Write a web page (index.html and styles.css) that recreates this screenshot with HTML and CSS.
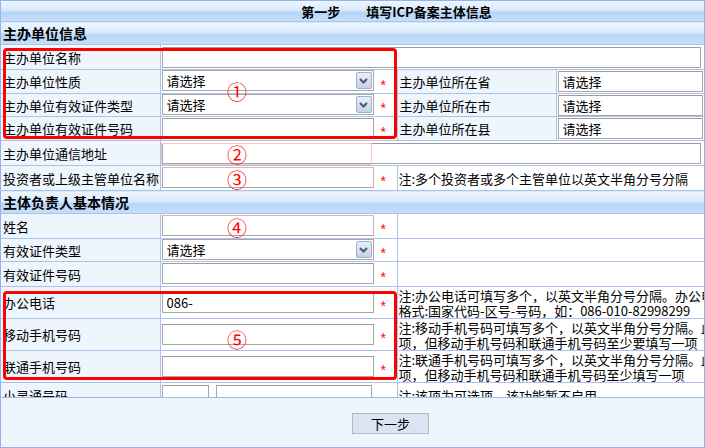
FILE: index.html
```html
<!DOCTYPE html>
<html lang="zh-CN">
<head>
<meta charset="UTF-8" />
<title>第一步 填写ICP备案主体信息</title>
<link rel="stylesheet" href="styles.css">
</head>
<body>
<div class="panel">
    <div class="scroll">
        <table class="form">
            <colgroup>
                <col class="c1"><col class="c2"><col class="c3"><col class="c4">
            </colgroup>
            <tr class="title"><td colspan="4">第一步　　填写ICP备案主体信息</td></tr>
            <tr class="section"><td colspan="4">主办单位信息</td></tr>
            <tr class="r25">
                <td class="label">主办单位名称</td>
                <td class="field" colspan="3"><input type="text" class="text wide"></td>
            </tr>
            <tr>
                <td class="label">主办单位性质</td>
                <td class="field"><div class="select">请选择<span class="arrow"><svg width="9" height="6" viewBox="0 0 9 6"><path d="M1 1l3.5 3.5L8 1" fill="none" stroke="#4d5b70" stroke-width="2"/></svg></span></div><span class="star">*</span></td>
                <td class="label">主办单位所在省</td>
                <td class="field"><div class="text side">请选择</div></td>
            </tr>
            <tr class="r23">
                <td class="label">主办单位有效证件类型</td>
                <td class="field"><div class="select">请选择<span class="arrow"><svg width="9" height="6" viewBox="0 0 9 6"><path d="M1 1l3.5 3.5L8 1" fill="none" stroke="#4d5b70" stroke-width="2"/></svg></span></div><span class="star">*</span></td>
                <td class="label">主办单位所在市</td>
                <td class="field"><div class="text side">请选择</div></td>
            </tr>
            <tr>
                <td class="label">主办单位有效证件号码</td>
                <td class="field"><input type="text" class="text"><span class="star">*</span></td>
                <td class="label">主办单位所在县</td>
                <td class="field"><div class="text side">请选择</div></td>
            </tr>
            <tr class="r25">
                <td class="label">主办单位通信地址</td>
                <td class="field" colspan="3"><input type="text" class="text wide"></td>
            </tr>
            <tr class="r25">
                <td class="label">投资者或上级主管单位名称</td>
                <td class="field"><input type="text" class="text hint"><span class="star">*</span></td>
                <td class="note" colspan="2">注:多个投资者或多个主管单位以英文半角分号分隔</td>
            </tr>
            <tr class="section"><td colspan="4">主体负责人基本情况</td></tr>
            <tr class="r25">
                <td class="label">姓名</td>
                <td class="field"><input type="text" class="text hint"><span class="star">*</span></td>
                <td colspan="2"></td>
            </tr>
            <tr class="r23">
                <td class="label">有效证件类型</td>
                <td class="field"><div class="select">请选择<span class="arrow"><svg width="9" height="6" viewBox="0 0 9 6"><path d="M1 1l3.5 3.5L8 1" fill="none" stroke="#4d5b70" stroke-width="2"/></svg></span></div><span class="star">*</span></td>
                <td colspan="2"></td>
            </tr>
            <tr class="r25">
                <td class="label">有效证件号码</td>
                <td class="field"><input type="text" class="text"><span class="star">*</span></td>
                <td colspan="2"></td>
            </tr>
            <tr class="tall">
                <td class="label">办公电话</td>
                <td class="field"><input type="text" class="text" value="086-"><span class="star">*</span></td>
                <td class="note" colspan="2"><div class="line">注:办公电话可填写多个，以英文半角分号分隔。办公电话</div><div class="line">格式:国家代码-区号-号码，如：086-010-82998299</div></td>
            </tr>
            <tr class="tall">
                <td class="label">移动手机号码</td>
                <td class="field"><input type="text" class="text"><span class="star">*</span></td>
                <td class="note" colspan="2"><div class="line">注:移动手机号码可填写多个，以英文半角分号分隔。此</div><div class="line">项，但移动手机号码和联通手机号码至少要填写一项</div></td>
            </tr>
            <tr class="tall">
                <td class="label">联通手机号码</td>
                <td class="field"><input type="text" class="text"><span class="star">*</span></td>
                <td class="note" colspan="2"><div class="line">注:联通手机号码可填写多个，以英文半角分号分隔。此</div><div class="line">项，但移动手机号码和联通手机号码至少填写一项</div></td>
            </tr>
            <tr class="r25">
                <td class="label">小灵通号码</td>
                <td class="field"><input type="text" class="text area"><input type="text" class="text phs"></td>
                <td class="note" colspan="2">注:该项为可选项。该功能暂不启用</td>
            </tr>
        </table>

        <div class="glow"></div>
        <div class="mark mark-1"></div>
        <div class="mark mark-5"></div>
        <span class="num n1">①</span>
        <span class="num n2">②</span>
        <span class="num n3">③</span>
        <span class="num n4">④</span>
        <span class="num n5">⑤</span>
    </div>
    <div class="footer">
        <button class="next">下一步</button>
    </div>
</div>
</body>
</html>
```

FILE: styles.css
```css
body {
    margin: 0;
    font-family: "Noto Sans CJK SC", "Liberation Sans", sans-serif;
    font-size: 13px;
    color: #000;
    background: #fff;
}
.panel {
    width: 705px;
    height: 448px;
    box-sizing: border-box;
    border: 1px solid #93b3ea;
    background: #fff;
}
.scroll {
    position: relative;
    height: 396px;
    overflow: hidden;
    border-bottom: 1px solid #9fbbe8;
}
.form {
    width: 703px;
    border-collapse: collapse;
    table-layout: fixed;
}
.c1 { width: 159px; }
.c2 { width: 237px; }
.c3 { width: 159px; }
.c4 { width: 148px; }
.form td {
    border: 1px solid #a9c3ec;
    padding: 0;
    height: 23px;
    line-height: 15px;
    white-space: nowrap;
    overflow: hidden;
}
.form tr.r25 td { height: 24px; }
.form tr.r23 td { height: 22px; }
.form tr.tall td { height: 31px; }
.form td:first-child { border-left: none; }
.form td:last-child { border-right: none; }
.form tr.title td {
    border-top: none;
    height: 20px;
    font-weight: bold;
    text-align: center;
    padding-left: 88px;
    background: linear-gradient(#eef6fe 0%, #d8eafc 45%, #b6d5f7 58%, #c6dff9 100%);
}
.form tr.section td {
    height: 22px;
    font-size: 14px;
    font-weight: bold;
    padding-left: 2px;
    background: linear-gradient(#eef6fe 0%, #d8eafc 45%, #b6d5f7 58%, #c6dff9 100%);
}
.label {
    background: #eef5fd;
    padding-left: 2px !important;
}
.field { padding-left: 1px !important; }
.note { padding-left: 1px !important; }
.line { height: 15px; overflow: hidden; }

.text {
    display: inline-block;
    vertical-align: middle;
    box-sizing: border-box;
    width: 212px;
    height: 21px;
    margin: 0;
    padding: 0 4px;
    border: 1px solid #a7a7a7;
    border-top-color: #9c9c9c;
    background: #fff;
    font: 13px/19px "Noto Sans CJK SC", "Liberation Sans", sans-serif;
    color: #000;
    outline: none;
}
.text.wide { width: 539px; }
.text.side { width: 145px; }
.text.hint { border-top-color: #dcb4b8; border-right-color: #d8b0b4; }
.text.area { width: 47px; margin-right: 7px; }
.text.phs { width: 156px; }

.select {
    display: inline-flex;
    align-items: center;
    justify-content: space-between;
    vertical-align: middle;
    box-sizing: border-box;
    width: 212px;
    height: 21px;
    padding: 0 1px 0 4px;
    border: 1px solid #a7a7a7;
    background: #fff;
}
.arrow {
    display: flex;
    align-items: center;
    justify-content: center;
    width: 16px;
    height: 17px;
    box-sizing: border-box;
    border: 1px solid #9fb0cc;
    border-radius: 2px;
    background: linear-gradient(#e8eef7, #c6d3e7);
}
.star {
    display: inline-block;
    vertical-align: -5px;
    margin-left: 7px;
    color: #f00;
    font-family: "Liberation Sans", sans-serif;
    font-size: 14px;
}

.glow {
    position: absolute;
    left: 160px;
    top: 142px;
    width: 211px;
    height: 22px;
    box-sizing: border-box;
    border: 1px solid #f3c8c8;
}
.mark {
    position: absolute;
    left: 2px;
    width: 394px;
    box-sizing: border-box;
    border: 3px solid #f00;
    border-radius: 4px;
}
.mark-1 { top: 47px; height: 91px; }
.mark-5 { top: 290px; height: 89px; }
.num {
    position: absolute;
    left: 226px;
    font-family: "Noto Sans CJK SC", sans-serif;
    font-size: 20px;
    line-height: 20px;
    color: #f00;
}
.n1 { top: 81px; }
.n2 { top: 144px; }
.n3 { top: 169px; }
.n4 { top: 217px; }
.n5 { top: 329px; }

.footer {
    height: 49px;
    box-sizing: border-box;
    padding: 15px 0 0 351px;
    background: #eef5fc;
}
.next {
    width: 77px;
    height: 21px;
    padding: 0;
    border: 1px solid #b4b8bf;
    background: #dae4f2;
    font: 13px/19px "Noto Sans CJK SC", sans-serif;
    color: #000;
    cursor: pointer;
}
```
